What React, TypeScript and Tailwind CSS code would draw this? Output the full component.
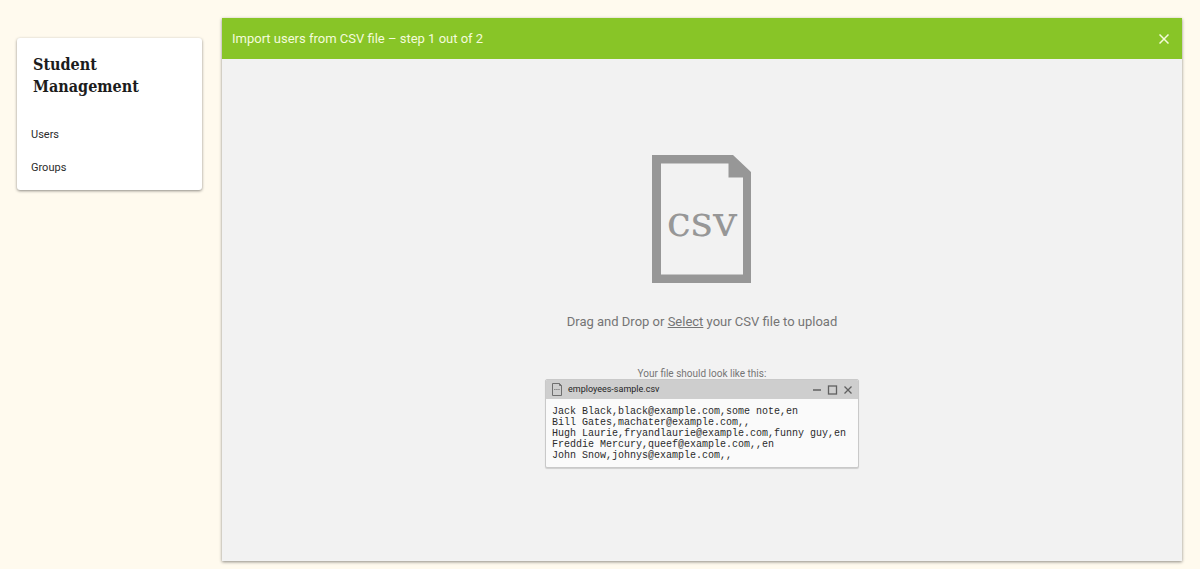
import React from "react";

const sampleRows = [
  "Jack Black,black@example.com,some note,en",
  "Bill Gates,machater@example.com,,",
  "Hugh Laurie,fryandlaurie@example.com,funny guy,en",
  "Freddie Mercury,queef@example.com,,en",
  "John Snow,johnys@example.com,,",
];

function Sidebar() {
  return (
    <nav
      aria-label="Student Management"
      className="mt-5 w-[185px] shrink-0 rounded-[3px] bg-white px-3.5 pt-4 pb-1.5 shadow-[0_1px_3px_rgba(0,0,0,0.45)]"
    >
      <h1 className="pl-0.5 font-['Roboto_Slab','DejaVu_Serif_Condensed','DejaVu_Serif',serif] text-base leading-[22px] font-bold text-[#1c1c1c]">
        Student
        <br />
        Management
      </h1>
      <ul className="mt-5 text-[11px] text-[#2b2b2b]">
        <li>
          <a href="#users" className="block leading-[33px]">Users</a>
        </li>
        <li>
          <a href="#groups" className="block leading-[33px]">Groups</a>
        </li>
      </ul>
    </nav>
  );
}

function CsvFileIcon() {
  return (
    <svg width="100" height="129" viewBox="0 0 100 129" role="img" aria-label="csv">
      <path
        fill="#979797"
        fillRule="evenodd"
        d="M0 0H81L99 17V128H0ZM9 8.500V119.500H91V22.500H76.500V8.500Z"
      />
      <text
        x="50"
        y="81"
        textAnchor="middle"
        fill="#979797"
        className="font-['Roboto_Slab','DejaVu_Serif',serif] text-[43px]"
      >
        csv
      </text>
    </svg>
  );
}

function SampleFile() {
  return (
    <section className="w-[314px] overflow-hidden rounded-[2px] border border-[#c9c9c9] bg-[#fafafa] shadow-[0_1px_1px_rgba(0,0,0,0.15)]">
      <div className="flex h-[19px] items-center bg-[#cecece] px-1.5">
        <svg width="10" height="13" viewBox="0 0 10 13" fill="none" stroke="#6f6f6f" aria-hidden="true">
          <path d="M.5.5H7.500L9.500 2.500V12.500H.5ZM7.500.5V2.500H9.500" />
          <path d="M2 6.500H8" strokeDasharray="1.600 .5" strokeOpacity="0.7" />
        </svg>
        <h2 className="ml-1.5 grow text-[9px] text-[#1f1f1f]">employees-sample.csv</h2>
        <svg width="40" height="10" viewBox="0 0 40 10" fill="none" stroke="#606060" strokeWidth="1.300" aria-hidden="true">
          <path d="M1 5H9" />
          <rect x="16.500" y="1" width="8" height="8" />
          <path d="M32.500 1.500L39.500 8.500M39.500 1.500L32.500 8.500" />
        </svg>
      </div>
      <pre className="px-1.5 pt-[7px] pb-1.5 font-['Liberation_Mono',monospace] text-[10px] leading-[11px] text-[#2b2b2b]">
        {sampleRows.join("\n")}
      </pre>
    </section>
  );
}

export default function App() {
  return (
    <div className="flex min-h-screen gap-5 bg-[#fffaee] pt-[18px] pr-[18px] pb-2 pl-[17px] font-['Roboto',sans-serif]">
      <div>
        <Sidebar />
      </div>
      <main className="flex grow flex-col bg-[#f2f2f2] shadow-[0_1px_3px_rgba(0,0,0,0.45)]">
        <header className="flex h-[41px] items-center justify-between bg-[#88c527] pr-3 pl-2.5 text-[#f4fbdc]">
          <h2 className="text-[13px]">Import users from CSV file – step 1 out of 2</h2>
          <button type="button" aria-label="Close" className="p-px">
            <svg width="10" height="10" viewBox="0 0 10 10" stroke="currentColor" strokeWidth="1.500" aria-hidden="true">
              <path d="M.5.5L9.500 9.500M9.500.5L.5 9.500" />
            </svg>
          </button>
        </header>
        <div className="flex grow flex-col items-center pt-24 text-[#757575]">
          <CsvFileIcon />
          <p className="mt-7 text-[13px] leading-5">
            Drag and Drop or{" "}
            <button type="button" className="cursor-pointer underline">Select</button> your CSV file to upload
          </p>
          <p className="mt-9 text-[10px] leading-[11px]">Your file should look like this:</p>
          <SampleFile />
        </div>
      </main>
    </div>
  );
}
